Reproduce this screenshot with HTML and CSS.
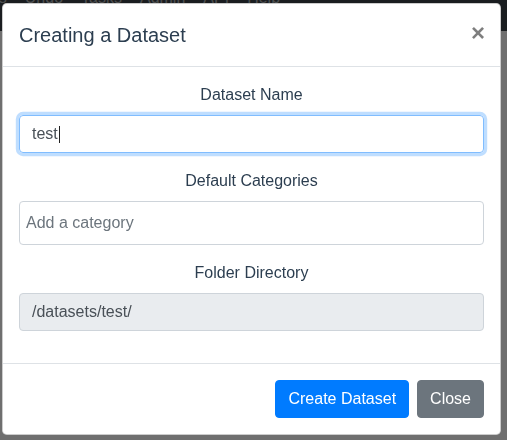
FILE: index.html
```html
<!DOCTYPE html>
<html>
<head>
<meta charset="utf-8">
<link rel="stylesheet" href="styles.css">
</head>
<body>
<div class="page">
  <nav class="navbar">
    <span class="nav-link first">Settings</span>
    <span class="nav-link">Undo</span>
    <span class="nav-link">Tasks</span>
    <span class="nav-link">Admin</span>
    <span class="nav-link">API</span>
    <span class="nav-link">Help</span>
  </nav>
  <div class="content"></div>
</div>
<div class="backdrop"></div>
<div class="modal-layer">
  <div class="modal">
    <div class="modal-header">
      <h5 class="modal-title">Creating a Dataset</h5>
      <span class="close">&times;</span>
    </div>
    <div class="modal-body">
      <div class="form-group">
        <label class="label">Dataset Name</label>
        <div class="form-control focused">test<span class="caret"></span></div>
      </div>
      <div class="form-group">
        <label class="label">Default Categories</label>
        <div class="tags-input"><span class="placeholder">Add a category</span></div>
      </div>
      <div class="form-group">
        <label class="label">Folder Directory</label>
        <div class="form-control readonly">/datasets/test/</div>
      </div>
    </div>
    <div class="modal-footer">
      <span class="btn btn-primary">Create Dataset</span>
      <span class="btn btn-secondary">Close</span>
    </div>
  </div>
</div>
</body>
</html>
```

FILE: styles.css
```css
* { box-sizing: border-box; }
html, body { margin: 0; padding: 0; }
body {
  font-family: "Liberation Sans", Arial, Helvetica, sans-serif;
  font-size: 16px;
  line-height: 1.5;
  color: #2c3e50;
  width: 507px;
  height: 440px;
  overflow: hidden;
}
.page { height: 440px; display: flex; flex-direction: column; }
.navbar {
  height: 31px;
  background: #343a40;
  display: flex;
  gap: 18px;
  overflow: hidden;
  padding-left: 28px;
}
.nav-link {
  color: rgba(255, 255, 255, 0.5);
  margin-top: -14px;
  line-height: 24px;
  white-space: nowrap;
}
.nav-link.first { margin-left: -79px; }
.content { flex: 1; background: #dfdfdf; }
.backdrop {
  position: fixed;
  inset: 0;
  background: rgba(0, 0, 0, 0.5);
}
.modal-layer {
  position: fixed;
  inset: 0;
  padding: 3px 0 0 2px;
}
.modal {
  width: 499px;
  background: #fff;
  border: 1px solid rgba(0, 0, 0, 0.2);
  border-radius: 4.8px;
  display: flex;
  flex-direction: column;
}
.modal-header {
  display: flex;
  align-items: flex-start;
  justify-content: space-between;
  padding: 16px;
  border-bottom: 1px solid #dee2e6;
}
.modal-title {
  margin: 0;
  font-size: 20px;
  font-weight: 400;
  line-height: 30px;
  color: #2c3e50;
}
.close {
  font-size: 24px;
  font-weight: 700;
  line-height: 1;
  color: #000;
  opacity: 0.5;
  text-shadow: 0 1px 0 #fff;
  padding: 16px;
  margin: -15px -17px -16px auto;
}
.modal-body { padding: 16px; }
.form-group {
  margin-bottom: 16px;
  display: flex;
  flex-direction: column;
  align-items: center;
}
.label {
  display: inline-block;
  margin-bottom: 8px;
  line-height: 24px;
}
.form-control {
  align-self: stretch;
  height: 38px;
  padding: 6px 12px;
  border: 1px solid #ced4da;
  border-radius: 4px;
  color: #495057;
  line-height: 24px;
  display: flex;
  align-items: center;
}
.form-control.focused {
  border-color: #80bdff;
  box-shadow: 0 0 0 3.2px rgba(0, 123, 255, 0.25);
}
.caret {
  display: inline-block;
  width: 1px;
  height: 17px;
  background: #222;
  margin-left: 1px;
}
.form-control.readonly { background: #e9ecef; }
.tags-input {
  align-self: stretch;
  height: 44px;
  padding: 0 6px;
  border: 1px solid #ced4da;
  border-radius: 4px;
  display: flex;
  align-items: center;
}
.placeholder { color: #6c757d; line-height: 24px; }
.modal-footer {
  display: flex;
  justify-content: flex-end;
  align-items: center;
  padding: 12px;
  border-top: 1px solid #dee2e6;
}
.btn {
  display: inline-block;
  margin: 4px;
  padding: 6px 12px;
  border: 1px solid transparent;
  border-radius: 4px;
  color: #fff;
  line-height: 24px;
  font-size: 16px;
}
.btn-primary { background: #007bff; border-color: #007bff; }
.btn-secondary { background: #6c757d; border-color: #6c757d; }
```
